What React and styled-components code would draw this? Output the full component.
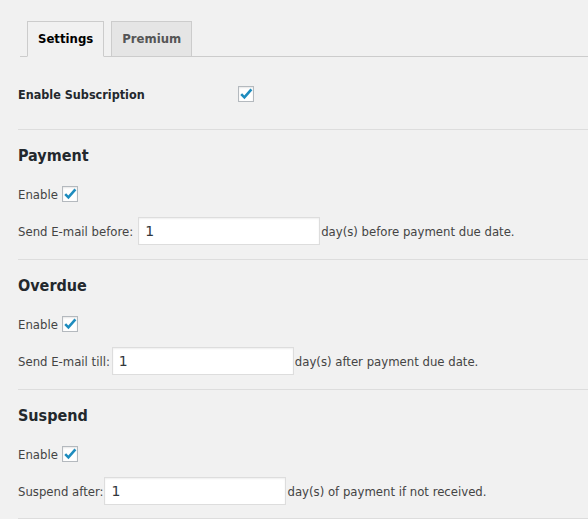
import React from 'react';
import styled, { createGlobalStyle } from 'styled-components';

const GlobalStyle = createGlobalStyle`
  body {
    margin: 0;
    background: #f1f1f1;
    color: #444;
    font-family: "DejaVu Sans Condensed", "DejaVu Sans", sans-serif;
    font-stretch: condensed;
    font-size: 13px;
  }
`;

const Page = styled.div`
  padding-top: 21px;
`;

const TabBar = styled.nav`
  display: flex;
  align-items: flex-end;
  gap: 7px;
  margin-left: 20px;
  padding-left: 7px;
  border-bottom: 1px solid #ccc;
`;

const Tab = styled.a`
  padding: 5px 10px;
  font-size: 13px;
  font-weight: bold;
  line-height: 24px;
  text-decoration: none;
  border: 1px solid #ccc;
  border-bottom: ${props => (props.$active ? '1px solid #f1f1f1' : 'none')};
  margin-bottom: ${props => (props.$active ? '-1px' : '0')};
  background: ${props => (props.$active ? '#f1f1f1' : '#e5e5e5')};
  color: ${props => (props.$active ? '#000' : '#555')};
  cursor: pointer;
`;

const Content = styled.div`
  padding-left: 18px;
`;

const SubscriptionRow = styled.div`
  display: flex;
  align-items: center;
  height: 30px;
  padding: 22px 0 20px;
`;

const RowLabel = styled.span`
  width: 220px;
  font-size: 12.5px;
  font-weight: bold;
  color: #23282d;
`;

const Section = styled.section`
  border-top: 1px solid #ddd;
  padding: 15px 0 14px;

  &:last-of-type {
    padding-bottom: 13px;
    border-bottom: 1px solid #ddd;
  }
`;

const SectionTitle = styled.h2`
  margin: 0 0 13px;
  font-size: 16px;
  line-height: 22px;
  font-weight: bold;
  color: #23282d;
`;

const Field = styled.div`
  display: flex;
  align-items: center;
  gap: ${props => props.$gap || 0}px;
  height: 28px;

  & + & {
    margin-top: 9px;
  }
`;

const CheckBox = styled.span`
  display: inline-flex;
  box-sizing: border-box;
  width: 16px;
  height: 16px;
  border: 1px solid #b4b9be;
  background: #fff;
  box-shadow: inset 0 1px 2px rgba(0, 0, 0, 0.1);

  svg {
    display: block;
  }
`;

const NumberInput = styled.input`
  box-sizing: border-box;
  width: 182px;
  height: 28px;
  margin: 0 0 0 ${props => props.$offset}px;
  padding: 0 6px;
  border: 1px solid #ddd;
  background: #fff;
  box-shadow: inset 0 1px 2px rgba(0, 0, 0, 0.07);
  font-family: "DejaVu Sans", sans-serif;
  font-size: 14px;
  color: #32373c;
  outline: 0;
`;

const Suffix = styled.span`
  margin-left: 1px;
`;

function Check() {
  return (
    <CheckBox>
      <svg width="14" height="14" viewBox="0 0 14 14">
        <path d="M2.2 7.2 L5.4 10.4 L12.4 2.4" fill="none" stroke="#1e8cbe" strokeWidth="2.6" />
      </svg>
    </CheckBox>
  );
}

const SECTIONS = [
  { title: 'Payment', label: 'Send E-mail before:', offset: 5, suffix: 'day(s) before payment due date.' },
  { title: 'Overdue', label: 'Send E-mail till:', offset: 2, suffix: 'day(s) after payment due date.' },
  { title: 'Suspend', label: 'Suspend after:', offset: 1, suffix: 'day(s) of payment if not received.' },
];

export default function App() {
  return (
    <Page>
      <GlobalStyle />
      <TabBar>
        <Tab $active>Settings</Tab>
        <Tab>Premium</Tab>
      </TabBar>
      <Content>
        <SubscriptionRow>
          <RowLabel>Enable Subscription</RowLabel>
          <Check />
        </SubscriptionRow>
        {SECTIONS.map(section => (
          <Section key={section.title}>
            <SectionTitle>{section.title}</SectionTitle>
            <Field $gap={4}>
              <span>Enable</span>
              <Check />
            </Field>
            <Field>
              <span>{section.label}</span>
              <NumberInput type="text" defaultValue="1" $offset={section.offset} />
              <Suffix>{section.suffix}</Suffix>
            </Field>
          </Section>
        ))}
      </Content>
    </Page>
  );
}
